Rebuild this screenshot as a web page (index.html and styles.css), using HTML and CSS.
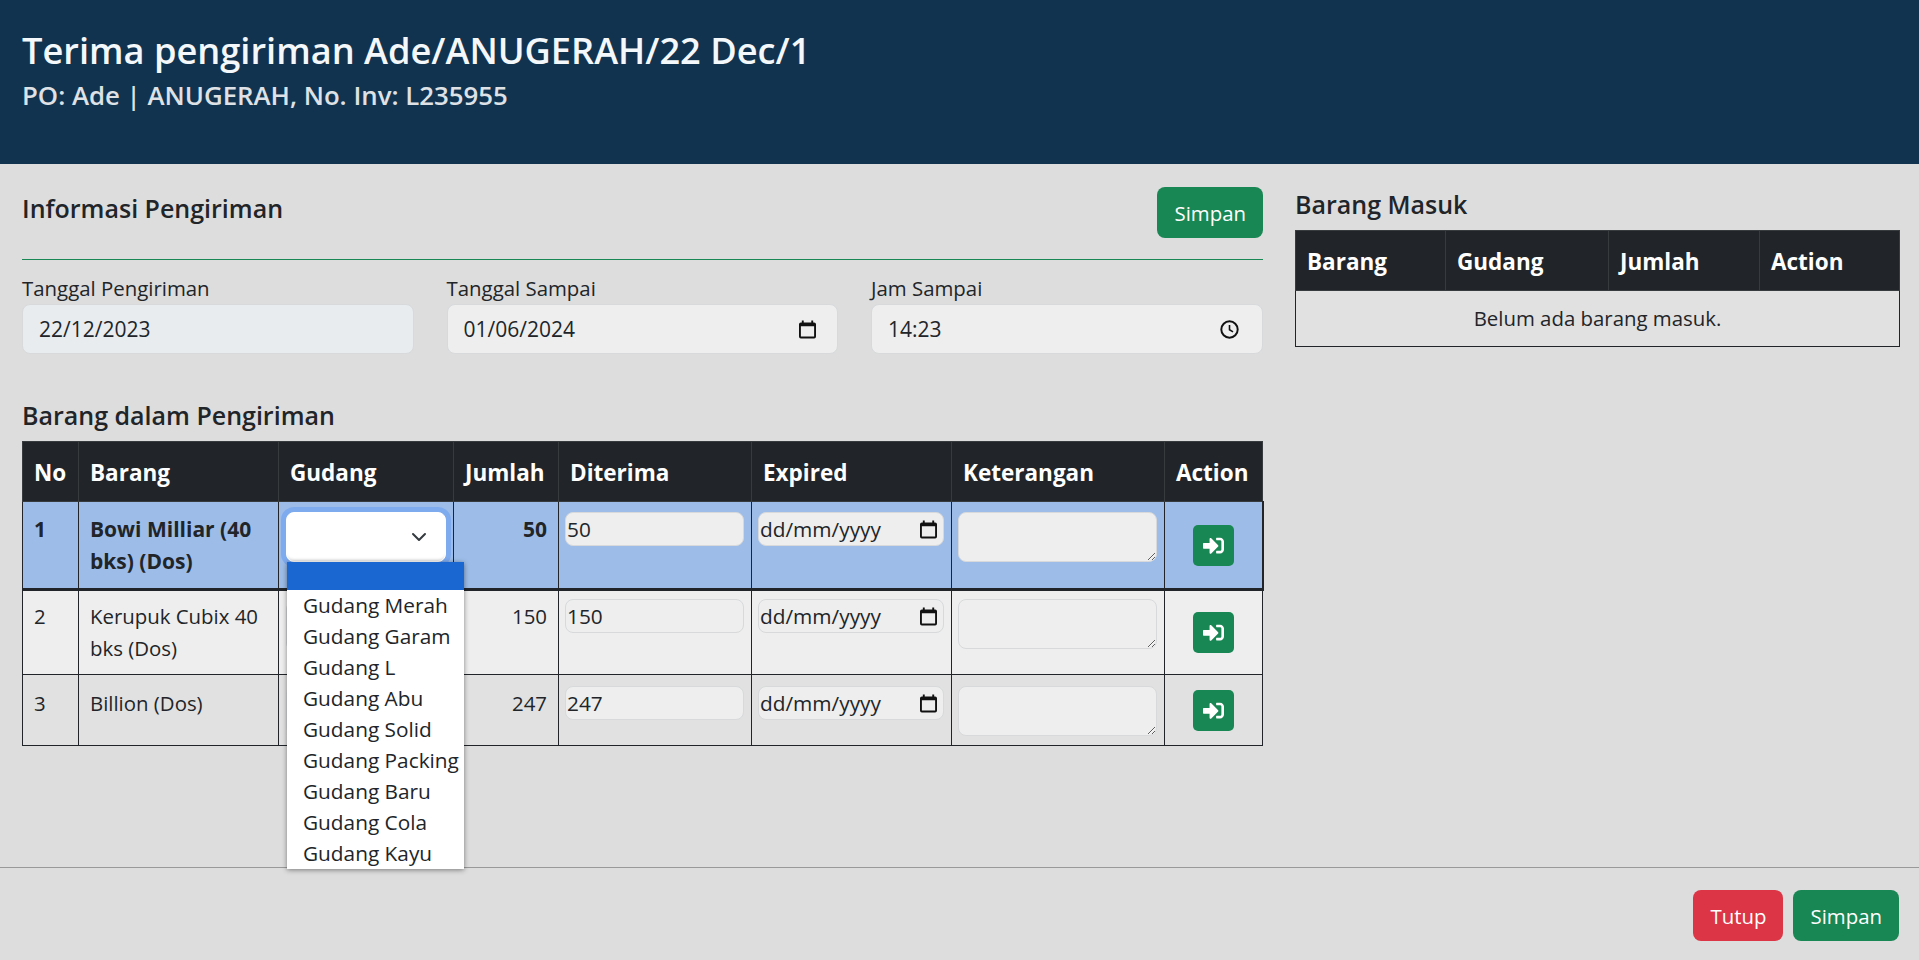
FILE: index.html
```html
<!DOCTYPE html>
<html>
<head>
  <meta charset="utf-8">
  <title>Terima pengiriman</title>
  <link rel="stylesheet" href="styles.css">
</head>
<body>
  <svg class="defs">
    <defs>
      <symbol id="icon-calendar" viewBox="0 0 18 19">
        <path d="M3 0h2v2h8V0h2v2h1a2 2 0 0 1 2 2v13a2 2 0 0 1-2 2H2a2 2 0 0 1-2-2V4a2 2 0 0 1 2-2h1zM2 6v11h14V6z"/>
      </symbol>
      <symbol id="icon-clock" viewBox="0 0 16 16">
        <path d="M8 1a7 7 0 1 0 0 14A7 7 0 0 0 8 1zm0 1.500a5.500 5.500 0 1 1 0 11A5.500 5.500 0 0 1 8 2.500zM7.400 4.500v4l3 1.800.6-1-2.400-1.400V4.500z"/>
      </symbol>
      <symbol id="icon-chevron" viewBox="0 0 16 16">
        <path fill="none" stroke="#343a40" stroke-width="2" stroke-linecap="round" stroke-linejoin="round" d="M2 5l6 6 6-6"/>
      </symbol>
      <symbol id="icon-sign-in" viewBox="0 0 512 512">
        <path d="M416 448h-84c-6.600 0-12-5.400-12-12v-40c0-6.600 5.400-12 12-12h84c17.700 0 32-14.300 32-32V160c0-17.700-14.300-32-32-32h-84c-6.600 0-12-5.400-12-12V76c0-6.600 5.400-12 12-12h84c53 0 96 43 96 96v192c0 53-43 96-96 96zm-47-201L201 79c-15-15-41-4.500-41 17v96H24c-13.300 0-24 10.700-24 24v96c0 13.300 10.700 24 24 24h136v96c0 21.500 26 32 41 17l168-168c9.300-9.400 9.300-24.600 0-34z"/>
      </symbol>
    </defs>
  </svg>

  <header class="page-head">
    <h1 class="page-title">Terima pengiriman Ade/ANUGERAH/22 Dec/1</h1>
    <div class="page-sub">PO: Ade | ANUGERAH, No. Inv: L235955</div>
  </header>

  <main class="page-main">
    <section class="col-left">
      <div class="info-head">
        <h2 class="section-title">Informasi Pengiriman</h2>
        <button class="btn btn-green">Simpan</button>
      </div>
      <hr class="info-rule">
      <div class="info-fields">
        <div class="field">
          <label class="field-label">Tanggal Pengiriman</label>
          <div class="control control-readonly">22/12/2023</div>
        </div>
        <div class="field">
          <label class="field-label">Tanggal Sampai</label>
          <div class="control">01/06/2024<svg class="picker"><use href="#icon-calendar"/></svg></div>
        </div>
        <div class="field">
          <label class="field-label">Jam Sampai</label>
          <div class="control control-time">14:23<svg class="picker picker-clock"><use href="#icon-clock"/></svg></div>
        </div>
      </div>

      <h2 class="section-title items-title">Barang dalam Pengiriman</h2>
      <table class="grid grid-items">
        <colgroup>
          <col class="c-no"><col class="c-barang"><col class="c-gudang"><col class="c-jumlah">
          <col class="c-terima"><col class="c-expired"><col class="c-ket"><col class="c-action">
        </colgroup>
        <thead>
          <tr><th>No</th><th>Barang</th><th>Gudang</th><th>Jumlah</th><th>Diterima</th><th>Expired</th><th>Keterangan</th><th>Action</th></tr>
        </thead>
        <tbody>
          <tr class="row-active">
            <td>1</td>
            <td>Bowi Milliar (40 bks) (Dos)</td>
            <td class="cell-select">
              <div class="select select-open">
                <svg class="chevron"><use href="#icon-chevron"/></svg>
                <ul class="options">
                  <li class="option-current"></li>
                  <li>Gudang Merah</li>
                  <li>Gudang Garam</li>
                  <li>Gudang L</li>
                  <li>Gudang Abu</li>
                  <li>Gudang Solid</li>
                  <li>Gudang Packing</li>
                  <li>Gudang Baru</li>
                  <li>Gudang Cola</li>
                  <li>Gudang Kayu</li>
                </ul>
              </div>
            </td>
            <td class="num">50</td>
            <td class="cell-input"><input class="mini" type="text" value="50"></td>
            <td class="cell-input"><div class="mini mini-date">dd/mm/yyyy<svg class="picker"><use href="#icon-calendar"/></svg></div></td>
            <td class="cell-input"><textarea class="note"></textarea></td>
            <td class="cell-action"><button class="btn-go"><svg><use href="#icon-sign-in"/></svg></button></td>
          </tr>
          <tr class="row-plain">
            <td>2</td>
            <td>Kerupuk Cubix 40 bks (Dos)</td>
            <td class="cell-select"><div class="select"></div></td>
            <td class="num">150</td>
            <td class="cell-input"><input class="mini" type="text" value="150"></td>
            <td class="cell-input"><div class="mini mini-date">dd/mm/yyyy<svg class="picker"><use href="#icon-calendar"/></svg></div></td>
            <td class="cell-input"><textarea class="note"></textarea></td>
            <td class="cell-action"><button class="btn-go"><svg><use href="#icon-sign-in"/></svg></button></td>
          </tr>
          <tr class="row-alt">
            <td>3</td>
            <td>Billion (Dos)</td>
            <td class="cell-select"><div class="select"></div></td>
            <td class="num">247</td>
            <td class="cell-input"><input class="mini" type="text" value="247"></td>
            <td class="cell-input"><div class="mini mini-date">dd/mm/yyyy<svg class="picker"><use href="#icon-calendar"/></svg></div></td>
            <td class="cell-input"><textarea class="note"></textarea></td>
            <td class="cell-action"><button class="btn-go"><svg><use href="#icon-sign-in"/></svg></button></td>
          </tr>
        </tbody>
      </table>
    </section>

    <section class="col-right">
      <h2 class="section-title masuk-title">Barang Masuk</h2>
      <table class="grid grid-masuk">
        <colgroup>
          <col class="m-barang"><col class="m-gudang"><col class="m-jumlah"><col class="m-action">
        </colgroup>
        <thead>
          <tr><th>Barang</th><th>Gudang</th><th>Jumlah</th><th>Action</th></tr>
        </thead>
        <tbody>
          <tr class="row-alt"><td class="empty" colspan="4">Belum ada barang masuk.</td></tr>
        </tbody>
      </table>
    </section>
  </main>

  <footer class="page-foot">
    <button class="btn btn-red">Tutup</button>
    <button class="btn btn-green">Simpan</button>
  </footer>
</body>
</html>
```

FILE: styles.css
```css
* { box-sizing: border-box; }
html, body { height: 100%; }
body {
  margin: 0;
  height: 960px;
  display: flex;
  flex-direction: column;
  overflow: hidden;
  background-color: #dddddd;
  color: #212529;
  font-family: "Open Sans", "Noto Sans", sans-serif;
  font-size: 20.4px;
  line-height: 32px;
}
.defs { display: none; }

/* header */
.page-head {
  height: 164px;
  padding: 27px 22px 0;
  background-color: #123350;
}
.page-title {
  margin: 0;
  color: #f4f8fb;
  font-size: 36.200px;
  font-weight: 600;
  line-height: 46px;
}
.page-sub {
  color: #dee2e6;
  font-size: 25.800px;
  font-weight: 600;
  line-height: 44px;
}

/* body columns */
.page-main {
  flex: 1;
  display: flex;
  gap: 32px;
  padding: 23px 20px 0 22px;
}
.col-left { width: 1241px; }
.col-right { width: 604px; }
.section-title {
  margin: 0;
  font-size: 25px;
  font-weight: 600;
  line-height: 32px;
}

.info-head {
  display: flex;
  justify-content: space-between;
  align-items: flex-start;
}
.info-head .section-title { padding-top: 5px; }
.info-rule {
  margin: 21px 0 12px;
  border: 0;
  border-top: 1px solid #198754;
}
.info-fields {
  display: grid;
  grid-template-columns: repeat(3, 391.500px);
  column-gap: 33px;
}
.field-label { display: block; }
.control {
  display: flex;
  justify-content: space-between;
  align-items: center;
  height: 50px;
  padding: 0 21px 0 16px;
  background-color: #eeeeee;
  border: 1px solid #d7d9db;
  border-radius: 8px;
  font-size: 21px;
}
.control-readonly { background-color: #e9ecef; }
.control-time { padding-right: 22px; }
.picker {
  flex: none;
  width: 17px;
  height: 19px;
  fill: #111;
}
.picker-clock {
  width: 21px;
  height: 21px;
}
.items-title { margin: 45px 0 10px; }
.masuk-title { margin: 1px 0 10px; }

/* tables */
.grid {
  width: 100%;
  table-layout: fixed;
  border-collapse: collapse;
}
.grid th {
  padding: 15px 11px 12px;
  background-color: #212529;
  border: 1px solid #373b3e;
  color: #fff;
  font-size: 22.500px;
  font-weight: 700;
  text-align: left;
}
.grid td {
  padding: 11px;
  border: 1px solid #212529;
  vertical-align: top;
}
.c-no { width: 56px; }
.c-barang { width: 200px; }
.c-gudang { width: 175px; }
.c-jumlah { width: 105px; }
.c-terima { width: 193px; }
.c-expired { width: 200px; }
.c-ket { width: 213px; }
.c-action { width: 98px; }
.m-barang { width: 150px; }
.m-gudang { width: 163px; }
.m-jumlah { width: 151px; }
.m-action { width: 140px; }

.row-active td {
  background-color: #9dbde8;
  border-bottom: 3px solid #212529;
  font-size: 21px;
  font-weight: 700;
}
.row-active td:last-child { border-right-width: 2px; }
.row-plain td { background-color: #eeeeee; padding-top: 9px; padding-bottom: 10px; }
.row-alt td { background-color: #e1e1e1; padding-top: 12px; }
.grid .num { text-align: right; }
.grid .empty {
  padding: 11px 11px 12px;
  text-align: center;
}

.grid .cell-input { padding: 10px 7px 8px 6px; }
.row-plain .cell-input { padding-top: 8px; }
.row-alt .cell-input { padding-top: 11px; }
.grid .cell-select { padding: 10px 7px; }
.grid .cell-action {
  padding: 8px;
  text-align: center;
  vertical-align: middle;
}

.mini {
  display: flex;
  justify-content: space-between;
  align-items: center;
  width: 100%;
  height: 34px;
  padding: 0 1px;
  background-color: #eeeeee;
  border: 1px solid #d7d9db;
  border-radius: 8px;
  color: #212529;
  font: inherit;
  font-size: 20.800px;
  font-weight: 400;
}
.mini-date { padding-right: 6px; }
.note {
  display: block;
  width: 100%;
  height: 50px;
  background-color: #eeeeee;
  border: 1px solid #d7d9db;
  border-radius: 8px;
}

/* select with its open list */
.select {
  position: relative;
  width: 160px;
  height: 50px;
  background-color: #eeeeee;
  border: 1px solid #d7d9db;
  border-radius: 8px;
}
.select-open {
  background-color: #fff;
  border-color: #fff;
  box-shadow: 0 0 0 5px #7eaaee, inset 0 -3px 3px -2px rgba(0, 0, 0, 0.12);
}
.chevron {
  position: absolute;
  top: 16px;
  right: 18px;
  width: 16px;
  height: 16px;
}
.options {
  position: absolute;
  top: 49px;
  left: 0;
  z-index: 5;
  width: 177px;
  height: 307px;
  margin: 0;
  padding: 0;
  overflow: hidden;
  list-style: none;
  background-color: #fff;
  box-shadow: 0 1px 5px rgba(0, 0, 0, 0.45);
  font-size: 20.800px;
  font-weight: 400;
}
.options li {
  height: 31px;
  padding-left: 16px;
  line-height: 30px;
  white-space: nowrap;
}
.options .option-current {
  height: 28px;
  background-color: #1a67d2;
}

/* buttons */
.btn {
  height: 51px;
  padding: 0 17px;
  border: 0;
  border-radius: 8px;
  color: #fff;
  font: inherit;
}
.btn-green { background-color: #198754; }
.btn-red { background-color: #dc3545; }
.btn-go {
  display: inline-flex;
  justify-content: center;
  align-items: center;
  width: 41px;
  height: 41px;
  padding: 0;
  border: 0;
  border-radius: 5px;
  background-color: #198754;
  vertical-align: middle;
}
.btn-go svg {
  width: 21px;
  height: 21px;
  fill: #fff;
}

/* footer */
.page-foot {
  display: flex;
  justify-content: flex-end;
  gap: 10px;
  height: 93px;
  padding: 22px 20px 0;
  border-top: 1px solid #999;
}
```
